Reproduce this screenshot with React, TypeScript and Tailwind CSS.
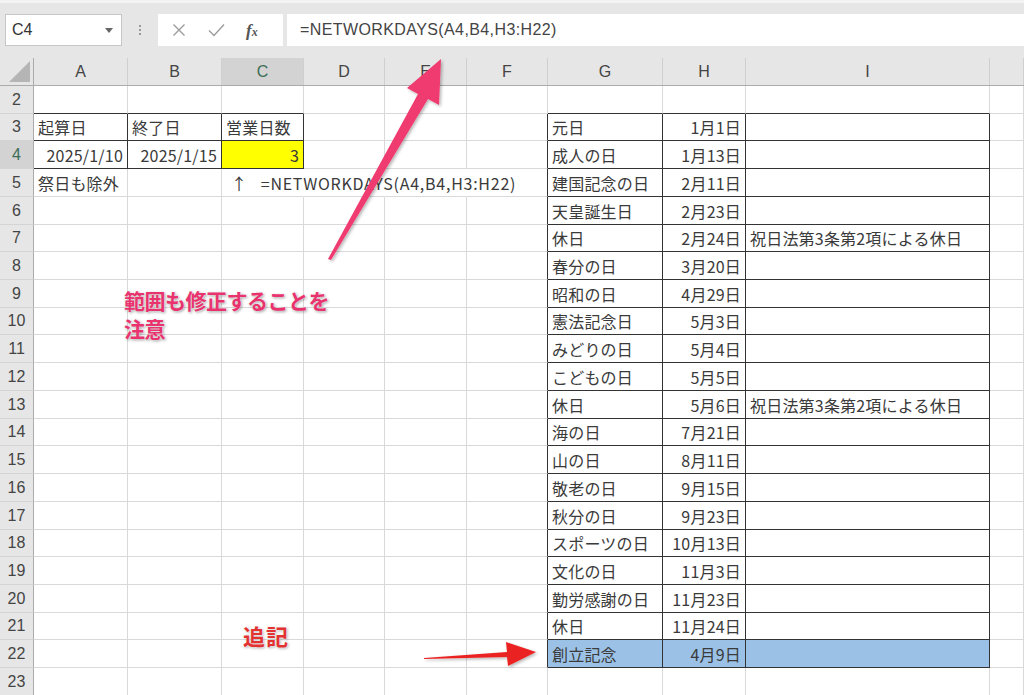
import React from 'react';

type Cell = { text?: string; align?: 'left' | 'right'; bg?: string; wide?: boolean };

const COLS = [
  { key: 'A', w: 'w-[94px]' },
  { key: 'B', w: 'w-[94px]' },
  { key: 'C', w: 'w-[82px]' },
  { key: 'D', w: 'w-[81px]' },
  { key: 'E', w: 'w-[82px]' },
  { key: 'F', w: 'w-[81px]' },
  { key: 'G', w: 'w-[115px]' },
  { key: 'H', w: 'w-[83px]' },
  { key: 'I', w: 'w-[244px]' },
  { key: 'J', w: 'flex-1' },
];

const holidays: [string, string, string?][] = [
  ['元日', '1月1日'],
  ['成人の日', '1月13日'],
  ['建国記念の日', '2月11日'],
  ['天皇誕生日', '2月23日'],
  ['休日', '2月24日', '祝日法第3条第2項による休日'],
  ['春分の日', '3月20日'],
  ['昭和の日', '4月29日'],
  ['憲法記念日', '5月3日'],
  ['みどりの日', '5月4日'],
  ['こどもの日', '5月5日'],
  ['休日', '5月6日', '祝日法第3条第2項による休日'],
  ['海の日', '7月21日'],
  ['山の日', '8月11日'],
  ['敬老の日', '9月15日'],
  ['秋分の日', '9月23日'],
  ['スポーツの日', '10月13日'],
  ['文化の日', '11月3日'],
  ['勤労感謝の日', '11月23日'],
  ['休日', '11月24日'],
  ['創立記念', '4月9日'],
];

// rows 2..23
const ROWS = Array.from({ length: 22 }, (_, i) => i + 2);
const rowTop = (r: number) => Math.round(86 + (r - 2) * 27.72);

function getCell(r: number, c: number): Cell {
  const sheet: Record<string, Cell> = {
    '3-0': { text: '起算日' },
    '3-1': { text: '終了日' },
    '3-2': { text: '営業日数' },
    '4-0': { text: '2025/1/10', align: 'right' },
    '4-1': { text: '2025/1/15', align: 'right' },
    '4-2': { text: '3', align: 'right', bg: 'bg-[#ffff00]' },
    '5-0': { text: '祭日も除外' },
    '5-2': { text: '↑\u00a0\u00a0\u00a0=NETWORKDAYS(A4,B4,H3:H22)', wide: true },
  };
  const k = `${r}-${c}`;
  if (sheet[k]) return sheet[k];
  if (r >= 3 && r <= 22 && c >= 6 && c <= 8) {
    const h = holidays[r - 3];
    const bg = r === 22 ? 'bg-[#9bc2e6]' : undefined;
    if (c === 6) return { text: h[0], bg };
    if (c === 7) return { text: h[1], align: 'right', bg };
    return { text: h[2], bg };
  }
  return {};
}

const boxed = (r: number, c: number) =>
  (r >= 3 && r <= 4 && c >= 0 && c <= 2) || (r >= 3 && r <= 22 && c >= 6 && c <= 8);

// cells whose right gridline is hidden by overflowing text
const noRight = new Set(['5-2', '5-3', '5-4']);

function HeaderRow() {
  return (
    <div className="flex h-[28px] bg-[#e6e6e6] border-b border-[#ababab]">
      <div className="relative w-[34px] shrink-0 border-r border-[#ababab]">
        <svg className="absolute right-[3px] bottom-[3px]" width="21" height="21" viewBox="0 0 21 21">
          <polygon points="21,0 21,21 0,21" fill="#b5b5b5" />
        </svg>
      </div>
      {COLS.map((col) => (
        <div
          key={col.key}
          className={`${col.w} shrink-0 flex items-center justify-center border-r border-[#cfcfcf] text-[16px] ${
            col.key === 'C' ? 'bg-[#d3d3d3] text-[#3b6e55]' : 'text-[#444]'
          }`}
        >
          {col.key === 'J' ? '' : col.key}
        </div>
      ))}
    </div>
  );
}

function SheetRow({ r }: { r: number }) {
  const h = rowTop(r + 1) - rowTop(r);
  return (
    <div className="flex" style={{ height: h }}>
      <div
        className={`w-[34px] shrink-0 flex items-center justify-center border-r border-b border-r-[#ababab] border-b-[#d4d4d4] text-[16px] font-['Liberation_Sans',sans-serif] ${
          r === 4 ? 'bg-[#d3d3d3] text-[#3b6e55]' : 'bg-[#e6e6e6] text-[#444]'
        }`}
      >
        {r}
      </div>
      {COLS.map((col, c) => {
        const cell = getCell(r, c);
        const darkRight = boxed(r, c) || boxed(r, c + 1);
        const darkBottom = boxed(r, c) || boxed(r + 1, c);
        const hideRight = noRight.has(`${r}-${c}`);
        return (
          <div
            key={col.key}
            className={`${col.w} shrink-0 relative flex items-center border-r border-b px-[4px] text-[16px] text-[#3a3a3a] whitespace-nowrap ${
              darkRight ? 'border-r-[#333333]' : hideRight ? 'border-r-white' : 'border-r-[#d9d9d9]'
            } ${darkBottom ? 'border-b-[#333333]' : 'border-b-[#d9d9d9]'} ${cell.bg ?? 'bg-white'} ${
              cell.align === 'right' ? 'justify-end' : 'justify-start'
            }`}
          >
            {cell.text && (
              <span
                className={`relative z-10 leading-none ${
                  cell.wide ? 'ml-[5px] tracking-[0.75px]' : 'tracking-[0.2px]'
                }`}
              >
                {cell.text}
              </span>
            )}
          </div>
        );
      })}
    </div>
  );
}

function FormulaBar() {
  return (
    <div className="h-[58px] bg-[#e6e6e6] border-t-[3px] border-[#f3f3f3] flex items-start pt-[11px] pl-[5px]">
      <div className="w-[117px] h-[32px] bg-white border border-[#c6c6c6] flex items-center justify-between pl-[6px] pr-[8px]">
        <span className="text-[16px] text-[#333] font-['Liberation_Sans',sans-serif]">C4</span>
        <svg width="8" height="5" viewBox="0 0 8 5">
          <polygon points="0,0 8,0 4,5" fill="#666" />
        </svg>
      </div>
      <div className="w-[36px] h-[32px] flex items-center justify-center">
        <div className="flex flex-col gap-[2px]">
          <span className="block w-[2px] h-[2px] bg-[#9a9a9a]" />
          <span className="block w-[2px] h-[2px] bg-[#9a9a9a]" />
          <span className="block w-[2px] h-[2px] bg-[#9a9a9a]" />
        </div>
      </div>
      <div className="w-[125px] h-[32px] bg-white flex items-center">
        <svg className="ml-[14px]" width="14" height="14" viewBox="0 0 14 14">
          <path d="M1.5 1.5 L12.5 12.5 M12.5 1.5 L1.5 12.5" stroke="#9c9c9c" strokeWidth="1.4" />
        </svg>
        <svg className="ml-[22px]" width="17" height="14" viewBox="0 0 17 14">
          <path d="M1 7.5 L6 12.5 L16 1.5" stroke="#9c9c9c" strokeWidth="1.4" fill="none" />
        </svg>
        <span className="ml-[21px] text-[17px] italic font-bold text-[#555] font-['Liberation_Serif',serif] leading-none">
          f<span className="text-[12px]">x</span>
        </span>
      </div>
      <div className="ml-[4px] flex-1 h-[32px] bg-white flex items-center pl-[13px]">
        <span className="text-[16px] tracking-[0.4px] text-[#444] font-['Liberation_Sans',sans-serif]">
          =NETWORKDAYS(A4,B4,H3:H22)
        </span>
      </div>
    </div>
  );
}

function Annotations() {
  return (
    <>
      <svg className="absolute inset-0 pointer-events-none z-20" width="1024" height="695" viewBox="0 0 1024 695">
        <defs>
          <filter id="sh" x="-20%" y="-20%" width="140%" height="140%">
            <feDropShadow dx="1.5" dy="1.5" stdDeviation="1.5" floodColor="#000" floodOpacity="0.3" />
          </filter>
        </defs>
        {/* pink arrow */}
        <path
          d="M328 259 L418 94 L407 88 L441 59 L439 105 L428 99 L331 260 Z"
          fill="#f03a70"
          filter="url(#sh)"
        />
        {/* red arrow */}
        <path
          d="M424 658 L507 652 L506 642 L536 652 L508 666 L507 657 L424 659 Z"
          fill="#ea2424"
          filter="url(#sh)"
        />
      </svg>
      <div className="absolute left-[124px] top-[286px] z-20 text-[21px] leading-[28px] font-bold text-[#e8336e] [text-shadow:0_0_2px_#fff,1px_1px_3px_rgba(0,0,0,0.45)] font-['Noto_Sans_CJK_JP',sans-serif] tracking-[-0.5px]">
        <div>範囲も修正することを</div>
        <div>注意</div>
      </div>
      <div className="absolute left-[243px] top-[619px] z-20 text-[22px] tracking-[1px] font-bold text-[#e33232] [text-shadow:0_0_2px_#fff,1px_1px_3px_rgba(0,0,0,0.35)] font-['Noto_Sans_CJK_JP',sans-serif]">
        追記
      </div>
    </>
  );
}

export default function App() {
  return (
    <div className="relative w-[1024px] h-[695px] overflow-hidden bg-white font-['Noto_Sans_CJK_JP','Liberation_Sans',sans-serif]">
      <FormulaBar />
      <div className="font-['Liberation_Sans','Noto_Sans_CJK_JP',sans-serif]">
        <HeaderRow />
      </div>
      <div>
        {ROWS.map((r) => (
          <SheetRow key={r} r={r} />
        ))}
      </div>
      <Annotations />
    </div>
  );
}
